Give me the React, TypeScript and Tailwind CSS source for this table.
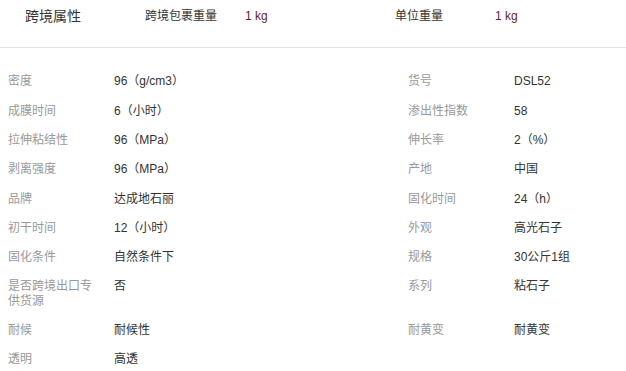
const font = { fontFamily: '"Liberation Sans", "Noto Sans CJK SC", sans-serif' };

const rows: [string, string, string?, string?][] = [
  ['密度', '96（g/cm3）', '货号', 'DSL52'],
  ['成膜时间', '6（小时）', '渗出性指数', '58'],
  ['拉伸粘结性', '96（MPa）', '伸长率', '2（%）'],
  ['剥离强度', '96（MPa）', '产地', '中国'],
  ['品牌', '达成地石丽', '固化时间', '24（h）'],
  ['初干时间', '12（小时）', '外观', '高光石子'],
  ['固化条件', '自然条件下', '规格', '30公斤1组'],
  ['是否跨境出口专供货源', '否', '系列', '粘石子'],
  ['耐候', '耐候性', '耐黄变', '耐黄变'],
  ['透明', '高透'],
];

const Cell = ({ label, value }: { label?: string; value?: string }) => (
  <div className="flex py-[7.4px] pl-2">
    <div className="w-[92px] shrink-0 text-[#999]">{label}</div>
    <div className="pl-[14px] text-[#333]">{value}</div>
  </div>
);

export default function App() {
  return (
    <div className="w-[626px] h-[371px] overflow-hidden bg-white text-[12px] leading-[14.5px]" style={font}>
      {/* Cross-border attributes */}
      <div className="flex items-center h-[48px] pb-[14px] border-b border-[#e5e5e5]">
        <div className="w-[145px] pl-[25px] text-[14px] text-[#333]">跨境属性</div>
        <div className="w-[100px] text-[#333]">跨境包裹重量</div>
        <div className="w-[150px] text-[#5e1f2e]">1 kg</div>
        <div className="w-[100px] text-[#333]">单位重量</div>
        <div className="text-[#5e1f2e]">1 kg</div>
      </div>

      <div className="grid grid-cols-[400px_400px] pt-[19px]">
        {rows.map(([l1, v1, l2, v2], i) => (
          <div key={i} className="contents">
            <Cell label={l1} value={v1} />
            <Cell label={l2} value={v2} />
          </div>
        ))}
      </div>
    </div>
  );
}
